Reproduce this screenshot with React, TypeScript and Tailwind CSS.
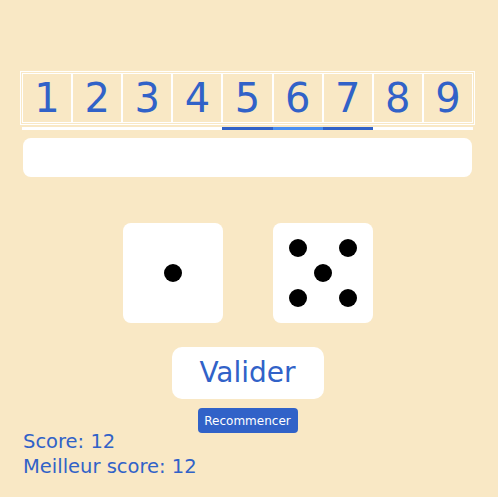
import React from "react";

const digits = [1, 2, 3, 4, 5, 6, 7, 8, 9];
// progress segment colours for each cell
const segments: Record<number, string> = {
  5: "bg-[#3162c8]",
  6: "bg-[#4a8ff2]",
  7: "bg-[#3162c8]",
};

function Pip() {
  return <span className="block h-[18px] w-[18px] rounded-full bg-black" />;
}

function Die({ value }: { value: number }) {
  const pos: Record<number, [number, number][]> = {
    1: [[50, 50]],
    5: [
      [25, 25],
      [75, 25],
      [50, 50],
      [25, 75],
      [75, 75],
    ],
  };
  return (
    <div className="relative h-[100px] w-[100px] rounded-[8px] bg-white">
      {pos[value].map(([x, y], i) => (
        <span
          key={i}
          className="absolute -translate-x-1/2 -translate-y-1/2"
          style={{ left: `${x}%`, top: `${y}%` }}
        >
          <Pip />
        </span>
      ))}
    </div>
  );
}

export default function App() {
  return (
    <div
      className="min-h-[497px] w-full bg-[#f9e8c5] pt-[71px] text-[#3162c8]"
      style={{ fontFamily: '"DejaVu Sans", Verdana, sans-serif' }}
    >
      <div className="ml-[20px] w-[455px]">
        <div className="border border-white p-px">
          <div className="flex">
            {digits.map((d) => (
              <div
                key={d}
                className="flex h-[50px] flex-1 items-center justify-center border border-white text-[40px] leading-none"
              >
                {d}
              </div>
            ))}
          </div>
        </div>
        <div className="mt-[2px] flex h-[3px] px-[2px]">
          {digits.map((d) => (
            <div key={d} className={`flex-1 ${segments[d] ?? "bg-white"}`} />
          ))}
        </div>
        <div className="mx-[3px] mt-[8px] h-[39px] rounded-[8px] bg-white" />
        <div className="mt-[46px] flex justify-center gap-[50px]">
          <Die value={1} />
          <Die value={5} />
        </div>
        <div className="mt-[24px] flex justify-center">
          <button className="flex h-[52px] w-[152px] items-center justify-center rounded-[10px] bg-white text-[28px] text-[#3162c8]">
            Valider
          </button>
        </div>
        <div className="mt-[9px] flex justify-center">
          <button className="flex h-[25px] w-[100px] items-center justify-center rounded-[4px] bg-[#3162c8] text-[12px] text-white">
            Recommencer
          </button>
        </div>
        <div className="ml-[3px] mt-[-4px] text-[19.5px] leading-[25px]">
          <div>Score: 12</div>
          <div>Meilleur score: 12</div>
        </div>
      </div>
    </div>
  );
}
